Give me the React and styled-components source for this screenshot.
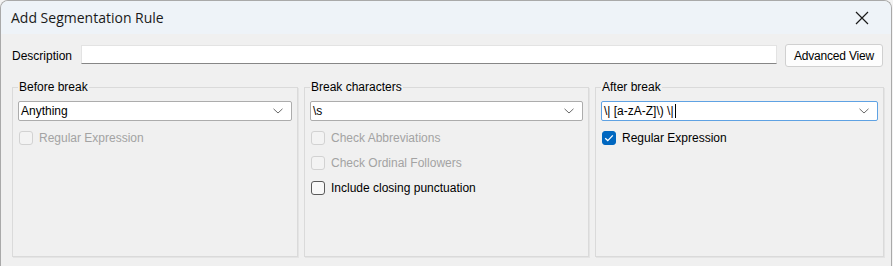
import React from 'react'
import styled, { createGlobalStyle } from 'styled-components'

const GlobalStyle = createGlobalStyle`
  html, body {
    margin: 0;
    padding: 0;
    background: #f3f3f3;
  }
  body {
    font-family: "Liberation Sans", Arial, sans-serif;
  }
`

const Window = styled.div`
  width: 890px;
  height: 265px;
  border: 1px solid #a9a9a9;
  border-bottom: none;
  border-radius: 8px 8px 0 0;
  overflow: hidden;
  background: #f0f0f0;
  display: flex;
  flex-direction: column;
`

const TitleBar = styled.div`
  height: 33px;
  background: #eef3f8;
  display: flex;
  align-items: center;
  justify-content: space-between;
  padding: 0 0 0 10px;
`

const Title = styled.div`
  font-family: "Open Sans", "Noto Sans", sans-serif;
  font-size: 14px;
  color: #1a1a1a;
  margin-top: -1px;
`

const CloseButton = styled.button`
  width: 46px;
  height: 33px;
  border: none;
  background: transparent;
  display: flex;
  align-items: center;
  justify-content: center;
  padding: 0;
  margin-right: 6px;
`

const Body = styled.div`
  flex: 1;
  display: flex;
  flex-direction: column;
  padding: 10px 8px 9px 11px;
`

const DescRow = styled.div`
  display: flex;
  align-items: center;
  height: 23px;
`

const Label = styled.label`
  font-size: 12px;
  color: #000;
  width: 69px;
`

const TextBox = styled.div`
  flex: 1;
  height: 17px;
  background: #fff;
  border: 1px solid #e3e3e3;
  border-bottom-color: #868686;
  margin-right: 8px;
  margin-top: -2px;
`

const Button = styled.button`
  width: 98px;
  height: 23px;
  background: #fdfdfd;
  border: 1px solid #d0d0d0;
  border-radius: 3px;
  font-family: "Liberation Sans", Arial, sans-serif;
  font-size: 12px;
  color: #000;
  padding: 0;
  letter-spacing: -0.2px;
`

const Groups = styled.div`
  flex: 1;
  display: grid;
  grid-template-columns: 286px 285px 289px;
  column-gap: 6px;
  margin-top: 13px;
`

const Group = styled.fieldset`
  margin: 0;
  padding: 7px 5px 0 5px;
  border: 1px solid #dadada;
  box-shadow: 1px 1px 0 #e4e4e4;
  min-width: 0;
  display: flex;
  flex-direction: column;
`

const Legend = styled.legend`
  font-size: 12px;
  color: #000;
  padding: 0 1px;
  margin-left: 0;
`

const Combo = styled.div`
  height: 18px;
  background: #fff;
  border: 1px solid ${p => (p.$focused ? '#5fa2e3' : '#acacac')};
  border-radius: 2px;
  display: flex;
  align-items: center;
  padding: 0 8px 0 2px;
  font-size: 12px;
  color: #000;
  margin-bottom: 8px;
`

const ComboText = styled.span`
  flex: 1;
  white-space: pre;
  display: flex;
  align-items: center;
`

const Caret = styled.span`
  display: inline-block;
  width: 1px;
  height: 14px;
  background: #000;
  margin-left: 1px;
`

const CheckRow = styled.div`
  display: flex;
  align-items: center;
  height: 25px;
  margin-top: -4px;
  margin-bottom: 4px;
  font-size: 12px;
  color: ${p => (p.$disabled ? '#a3a3a3' : '#000')};
`

const Box = styled.span`
  width: 12px;
  height: 12px;
  border-radius: 3px;
  margin-right: 6px;
  margin-left: 1px;
  display: flex;
  align-items: center;
  justify-content: center;
  border: 1px solid
    ${p => (p.$checked ? '#0067c0' : p.$disabled ? '#d2d2d2' : '#5a5a5a')};
  background: ${p => (p.$checked ? '#0067c0' : p.$disabled ? '#f3f3f3' : '#f8f8f8')};
`

const Chevron = () => (
  <svg width="10" height="6" viewBox="0 0 10 6">
    <path d="M0.5 0.8 L5 5 L9.5 0.8" fill="none" stroke="#6a6a6a" strokeWidth="1" />
  </svg>
)

const Check = ({ label, checked, disabled }) => (
  <CheckRow $disabled={disabled}>
    <Box $checked={checked} $disabled={disabled}>
      {checked && (
        <svg width="10" height="8" viewBox="0 0 10 8">
          <path d="M1.2 4.2 L3.8 6.6 L8.8 1.4" fill="none" stroke="#fff" strokeWidth="1.3" />
        </svg>
      )}
    </Box>
    {label}
  </CheckRow>
)

export default function App() {
  return (
    <>
      <GlobalStyle />
      <Window>
        <TitleBar>
          <Title>Add Segmentation Rule</Title>
          <CloseButton>
            <svg width="14" height="14" viewBox="0 0 14 14">
              <path d="M1 1 L13 13 M13 1 L1 13" stroke="#1a1a1a" strokeWidth="1.2" />
            </svg>
          </CloseButton>
        </TitleBar>
        <Body>
          <DescRow>
            <Label>Description</Label>
            <TextBox />
            <Button>Advanced View</Button>
          </DescRow>
          <Groups>
            <Group>
              <Legend>Before break</Legend>
              <Combo>
                <ComboText>Anything</ComboText>
                <Chevron />
              </Combo>
              <Check label="Regular Expression" disabled />
            </Group>
            <Group>
              <Legend>Break characters</Legend>
              <Combo>
                <ComboText>\s</ComboText>
                <Chevron />
              </Combo>
              <Check label="Check Abbreviations" disabled />
              <Check label="Check Ordinal Followers" disabled />
              <Check label="Include closing punctuation" />
            </Group>
            <Group>
              <Legend>After break</Legend>
              <Combo $focused>
                <ComboText>
                  {'\\| [a-zA-Z]\\) \\|'}
                  <Caret />
                </ComboText>
                <Chevron />
              </Combo>
              <Check label="Regular Expression" checked />
            </Group>
          </Groups>
        </Body>
      </Window>
    </>
  )
}
